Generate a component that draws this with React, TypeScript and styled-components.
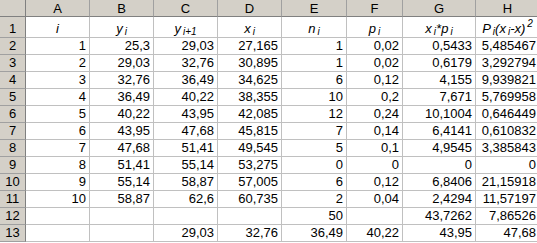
import React from "react";
import styled, { createGlobalStyle } from "styled-components";

const GlobalStyle = createGlobalStyle`
  html, body {
    margin: 0;
    padding: 0;
    background: #ffffff;
    overflow: hidden;
  }
  body {
    font-family: "Liberation Sans", Arial, sans-serif;
  }
`;

const colWidths = [26, 64, 64, 64, 64, 65, 56, 73, 64];
const colLetters = ["A", "B", "C", "D", "E", "F", "G", "H"];

const Sheet = styled.div`
  display: grid;
  grid-template-columns: ${colWidths.map((w) => `${w}px`).join(" ")};
  grid-template-rows: 17px 21px repeat(12, 17px);
  width: ${colWidths.reduce((a, b) => a + b, 0)}px;
  font-size: 13px;
  color: #000;
`;

const Corner = styled.div`
  background: #d4d0c8;
  border-right: 1px solid #808080;
  border-bottom: 1px solid #808080;
`;

const ColHead = styled.div`
  background: #d4d0c8;
  border-right: 1px solid #a0a0a0;
  border-bottom: 1px solid #808080;
  display: flex;
  align-items: center;
  justify-content: center;
  font-size: 13px;
  line-height: 1;
  padding-top: 1px;
`;

const RowHead = styled.div`
  background: #d4d0c8;
  border-right: 1px solid #808080;
  border-bottom: 1px solid #a0a0a0;
  display: flex;
  align-items: flex-end;
  justify-content: center;
  padding-bottom: 1px;
  line-height: 15px;
`;

const Cell = styled.div<{ $title?: boolean }>`
  border-right: 1px solid #c0c0c0;
  border-bottom: 1px solid #c0c0c0;
  display: flex;
  align-items: flex-end;
  justify-content: ${(p) => (p.$title ? "center" : "flex-end")};
  padding: 0 3px 1px 3px;
  line-height: 15px;
  white-space: nowrap;
  overflow: hidden;
  font-style: ${(p) => (p.$title ? "italic" : "normal")};
`;

const Sub = styled.sub`
  font-size: 10px;
  vertical-align: -2px;
  line-height: 0;
  margin-left: 2px;
`;

const Sup = styled.sup`
  font-size: 10px;
  vertical-align: 6px;
  line-height: 0;
  margin-left: 2px;
`;

const titles: React.ReactNode[] = [
  <>i</>,
  <>
    y<Sub>i</Sub>
  </>,
  <>
    y<Sub>i+1</Sub>
  </>,
  <>
    x<Sub>i</Sub>
  </>,
  <>
    n<Sub>i</Sub>
  </>,
  <>
    p<Sub>i</Sub>
  </>,
  <>
    x<Sub>i</Sub>*p<Sub>i</Sub>
  </>,
  <>
    P<Sub>i</Sub>(x<Sub>i</Sub>-x)<Sup>2</Sup>
  </>,
];

const rows: string[][] = [
  ["1", "25,3", "29,03", "27,165", "1", "0,02", "0,5433", "5,485467"],
  ["2", "29,03", "32,76", "30,895", "1", "0,02", "0,6179", "3,292794"],
  ["3", "32,76", "36,49", "34,625", "6", "0,12", "4,155", "9,939821"],
  ["4", "36,49", "40,22", "38,355", "10", "0,2", "7,671", "5,769958"],
  ["5", "40,22", "43,95", "42,085", "12", "0,24", "10,1004", "0,646449"],
  ["6", "43,95", "47,68", "45,815", "7", "0,14", "6,4141", "0,610832"],
  ["7", "47,68", "51,41", "49,545", "5", "0,1", "4,9545", "3,385843"],
  ["8", "51,41", "55,14", "53,275", "0", "0", "0", "0"],
  ["9", "55,14", "58,87", "57,005", "6", "0,12", "6,8406", "21,15918"],
  ["10", "58,87", "62,6", "60,735", "2", "0,04", "2,4294", "11,57197"],
  ["", "", "", "", "50", "", "43,7262", "7,86526"],
  ["", "", "29,03", "32,76", "36,49", "40,22", "43,95", "47,68"],
];

export default function App() {
  return (
    <>
      <GlobalStyle />
      <Sheet>
        <Corner />
        {colLetters.map((c) => (
          <ColHead key={c}>{c}</ColHead>
        ))}
        <RowHead>1</RowHead>
        {titles.map((t, i) => (
          <Cell key={`t${i}`} $title>
            <span>{t}</span>
          </Cell>
        ))}
        {rows.map((r, ri) => (
          <React.Fragment key={ri}>
            <RowHead>{ri + 2}</RowHead>
            {r.map((v, ci) => (
              <Cell key={ci}>{v}</Cell>
            ))}
          </React.Fragment>
        ))}
      </Sheet>
    </>
  );
}
